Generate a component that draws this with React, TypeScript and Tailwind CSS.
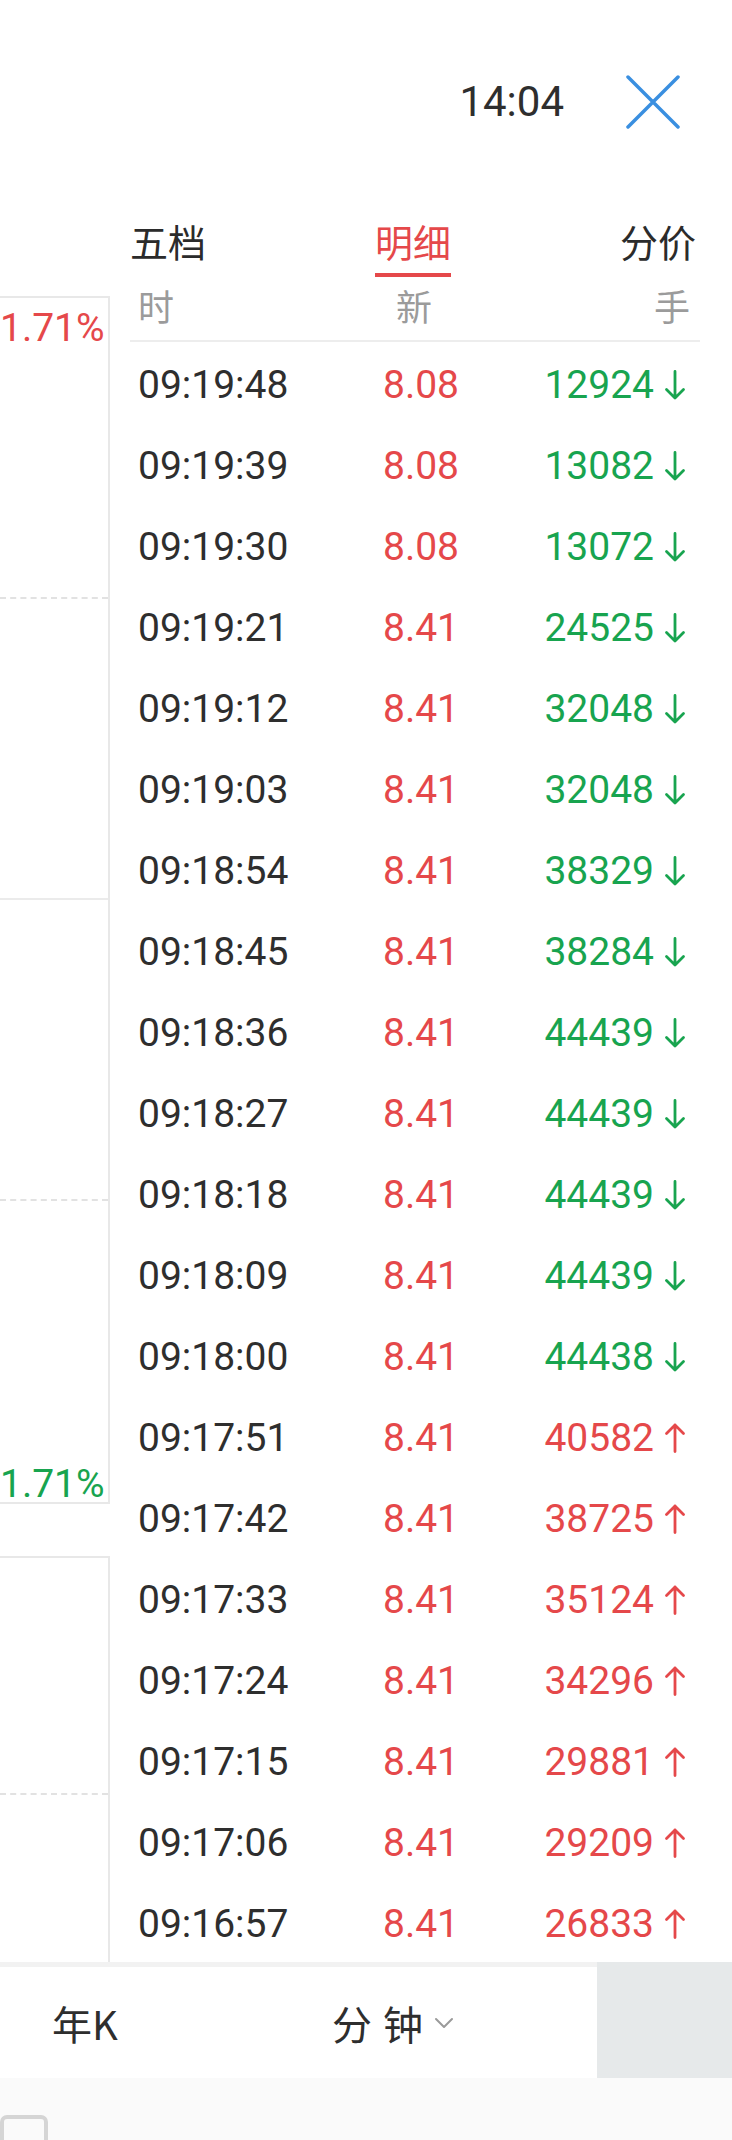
const trades = [
  { t: "09:19:48", p: "8.08", v: "12924", up: false },
  { t: "09:19:39", p: "8.08", v: "13082", up: false },
  { t: "09:19:30", p: "8.08", v: "13072", up: false },
  { t: "09:19:21", p: "8.41", v: "24525", up: false },
  { t: "09:19:12", p: "8.41", v: "32048", up: false },
  { t: "09:19:03", p: "8.41", v: "32048", up: false },
  { t: "09:18:54", p: "8.41", v: "38329", up: false },
  { t: "09:18:45", p: "8.41", v: "38284", up: false },
  { t: "09:18:36", p: "8.41", v: "44439", up: false },
  { t: "09:18:27", p: "8.41", v: "44439", up: false },
  { t: "09:18:18", p: "8.41", v: "44439", up: false },
  { t: "09:18:09", p: "8.41", v: "44439", up: false },
  { t: "09:18:00", p: "8.41", v: "44438", up: false },
  { t: "09:17:51", p: "8.41", v: "40582", up: true },
  { t: "09:17:42", p: "8.41", v: "38725", up: true },
  { t: "09:17:33", p: "8.41", v: "35124", up: true },
  { t: "09:17:24", p: "8.41", v: "34296", up: true },
  { t: "09:17:15", p: "8.41", v: "29881", up: true },
  { t: "09:17:06", p: "8.41", v: "29209", up: true },
  { t: "09:16:57", p: "8.41", v: "26833", up: true },
];

function Arrow({ up }: { up: boolean }) {
  const color = up ? "#e5484a" : "#18a44f";
  return (
    <svg width="26" height="30" viewBox="0 0 26 30" fill="none">
      {up ? (
        <path d="M13 28.5V2M4.5 10.5L13 2l8.5 8.5" stroke={color} strokeWidth="2.8" strokeLinecap="round" strokeLinejoin="round" />
      ) : (
        <path d="M13 1.5V28M4.5 19.5L13 28l8.5-8.5" stroke={color} strokeWidth="2.8" strokeLinecap="round" strokeLinejoin="round" />
      )}
    </svg>
  );
}

function Tab({ label, active }: { label: string; active?: boolean }) {
  return (
    <div className="flex flex-col items-center">
      <span className={`text-[38px] leading-[44px] ${active ? "text-[#e5484a]" : "text-[#2b2b2b]"}`}>{label}</span>
      <div className={`mt-[7px] h-[4px] w-full ${active ? "bg-[#e5484a]" : "bg-transparent"}`} />
    </div>
  );
}

export default function App() {
  return (
    <div className="w-[732px] h-[2140px] overflow-hidden bg-[#fafafa] font-['Roboto','Noto_Sans_CJK_SC',sans-serif]">
      <div className="bg-white">
        {/* top bar */}
        <div className="h-[204px] flex items-center justify-end pr-[52px]">
          <span className="text-[42px] leading-none text-[#2e2e2e]">14:04</span>
          <svg className="ml-[62px]" width="54" height="54" viewBox="0 0 54 54">
            <path d="M2 2L52 52M52 2L2 52" stroke="#3a8fe0" strokeWidth="3.5" strokeLinecap="round" />
          </svg>
        </div>

        <div className="flex">
          {/* chart edge */}
          <div className="w-[110px] shrink-0 pt-[92px] flex flex-col">
            <div className="border-t-2 border-r-2 border-b-2 border-[#e8e8e8] flex flex-col">
              <div className="h-[301px] border-b-2 border-dashed border-[#e2e2e2] overflow-hidden">
                <div className="pt-[7px] pr-[7px] text-right whitespace-nowrap text-[39px] leading-[46px] text-[#e5484a]">1.71%</div>
              </div>
              <div className="h-[301px] border-b-2 border-[#ebebeb]" />
              <div className="h-[301px] border-b-2 border-dashed border-[#e2e2e2]" />
              <div className="h-[301px] flex flex-col justify-end">
                <div className="mb-[-2px] pr-[7px] text-right whitespace-nowrap text-[39px] leading-[39px] text-[#18a44f]">1.71%</div>
              </div>
            </div>
            <div className="mt-[52px] flex-1 border-t-2 border-r-2 border-[#e8e8e8] flex flex-col">
              <div className="h-[237px] border-b-2 border-dashed border-[#e2e2e2]" />
              <div className="flex-1" />
            </div>
          </div>

          {/* detail panel */}
          <div className="flex-1 pl-[20px] pr-[32px]">
            <div className="pt-[18px] pr-[4px] flex justify-between">
              <Tab label="五档" />
              <Tab label="明细" active />
              <Tab label="分价" />
            </div>
            <div className="h-[65px] grid grid-cols-3 items-center pl-[8px] pr-[10px] border-b-2 border-[#ededed] text-[36px] text-[#9b9b9b]">
              <span>时</span>
              <span className="text-center">新</span>
              <span className="text-right">手</span>
            </div>
            {trades.map((r) => (
              <div key={r.t} className="h-[81px] pt-[5px] grid grid-cols-3 items-center pl-[8px] pr-[12px] text-[39px]">
                <span className="text-[#2e2e2e]">{r.t}</span>
                <span className="pl-[16px] text-center text-[#e5484a]">{r.p}</span>
                <div className="flex items-center justify-end gap-[8px]">
                  <span className={r.up ? "text-[#e5484a]" : "text-[#18a44f]"}>{r.v}</span>
                  <Arrow up={r.up} />
                </div>
              </div>
            ))}
          </div>
        </div>

        {/* period bar */}
        <div className="h-[116px] flex">
          <div className="flex-1 border-t-[5px] border-[#f2f2f2] flex items-center pl-[52px] text-[40px] text-[#2e2e2e] font-['Noto_Sans_CJK_SC',sans-serif]">
            <span className="w-[280px]">年K</span>
            <span className="[word-spacing:2px]">分 钟</span>
            <svg className="ml-[10px]" width="22" height="14" viewBox="0 0 22 14" fill="none">
              <path d="M3 3l8 8 8-8" stroke="#9a9a9a" strokeWidth="2" strokeLinecap="round" strokeLinejoin="round" />
            </svg>
          </div>
          <div className="w-[135px] bg-[#e6e9ea]" />
        </div>
      </div>

      <div className="pt-[37px]">
        <div className="w-[48px] h-[48px] border-[4px] border-[#d5d5d5] rounded-[7px]" />
      </div>
    </div>
  );
}
